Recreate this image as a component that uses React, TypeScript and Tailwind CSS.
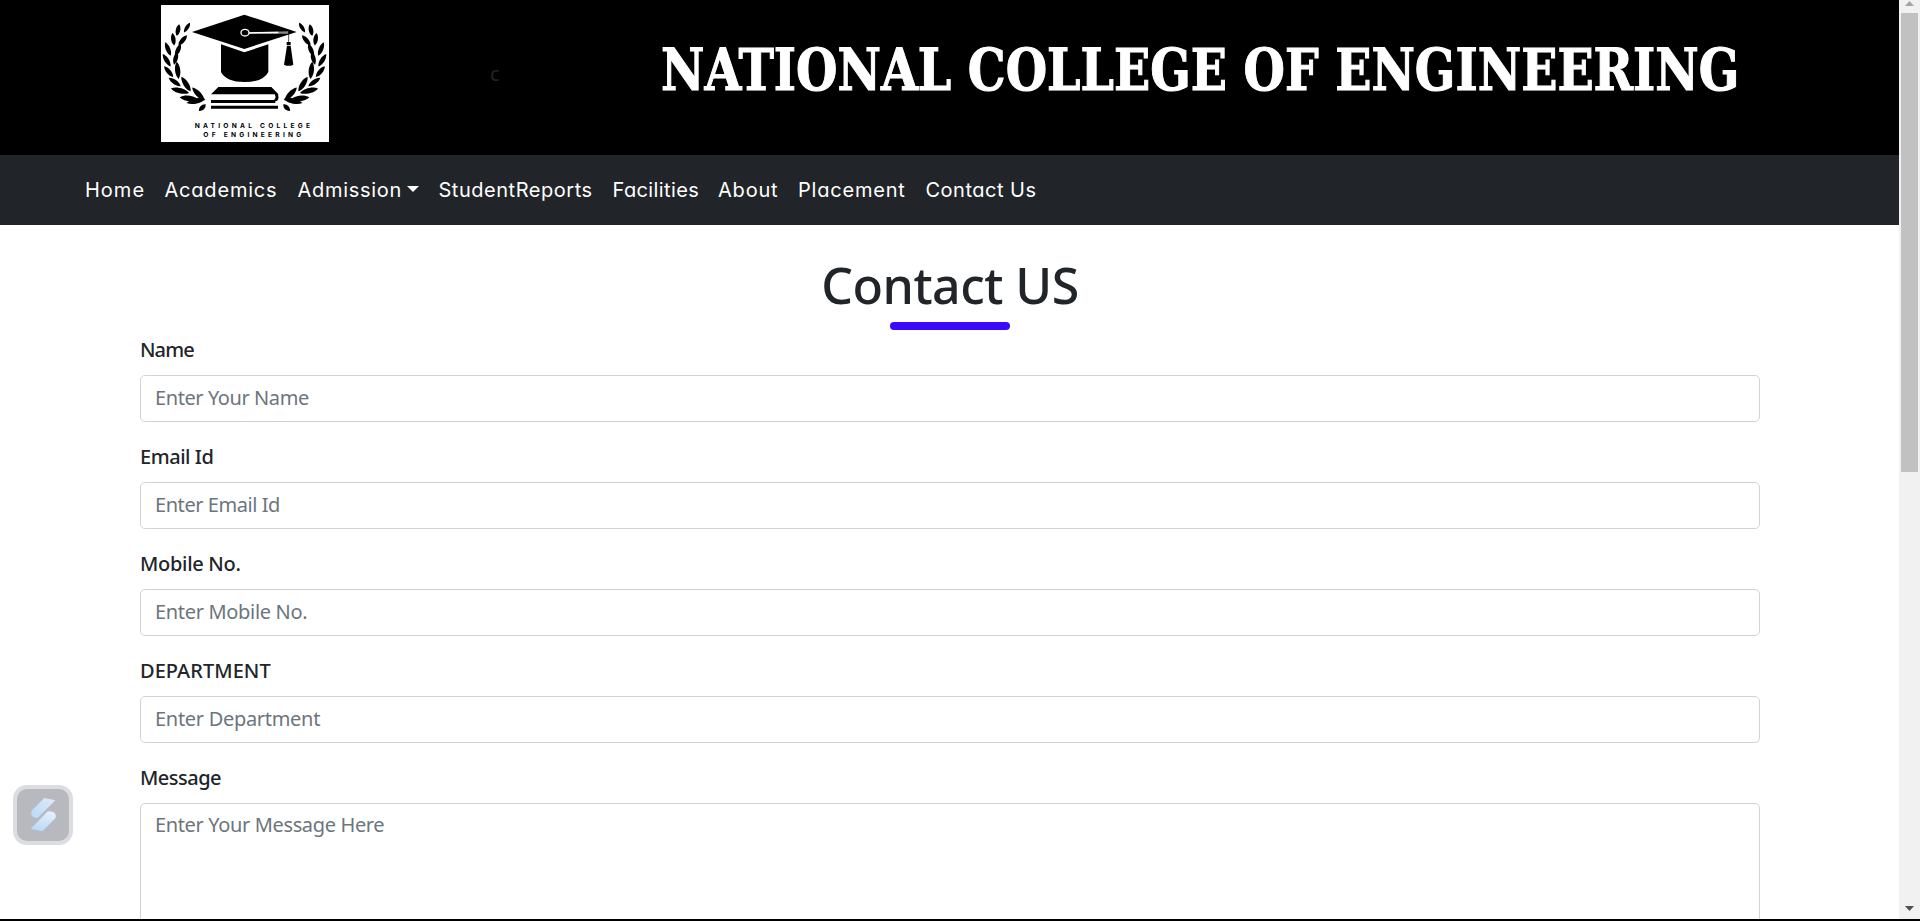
import React from "react";

const navItems = [
  { label: "Home", box: "w-[79.5px]", text: "tracking-[1px]" },
  { label: "Academics", box: "w-[133px]", text: "tracking-[0.8px]" },
  { label: "Admission", box: "w-[141px]", text: "tracking-[0.7px]", caret: true },
  { label: "StudentReports", box: "w-[174px]", text: "tracking-[0.53px]" },
  { label: "Facilities", box: "w-[105.5px]", text: "tracking-[0.38px]" },
  { label: "About", box: "w-[80px]", text: "tracking-[0.8px]" },
  { label: "Placement", box: "w-[127.5px]", text: "tracking-[0.8px]" },
  { label: "Contact Us", box: "w-[120px]", text: "tracking-[0.5px]" },
];

const fields = [
  { label: "Name", hint: "Enter Your Name", lt: "tracking-[-0.9px]", ht: "tracking-[-0.42px]" },
  { label: "Email Id", hint: "Enter Email Id", lt: "tracking-[-0.45px]", ht: "tracking-[-0.44px]" },
  { label: "Mobile No.", hint: "Enter Mobile No.", lt: "tracking-[-0.3px]", ht: "tracking-[-0.32px]" },
  { label: "DEPARTMENT", hint: "Enter Department", lt: "tracking-[0.05px]", ht: "tracking-[-0.3px]" },
];

const leaves: [number, number, number, number, number][] = [
  [111, 83, 17, 5, -58],
  [84, 90, 18, 6, -78],
  [98, 121, 20, 6, -50],
  [70, 118, 19, 6, -98],
  [84, 150, 20, 6, -66],
  [54, 147, 22, 6, 68],
  [77, 175, 20, 6, -76],
  [50, 181, 22, 6, 58],
  [83, 211, 26, 7, 84],
  [56, 215, 21, 6, 50],
  [108, 252, 26, 7, 58],
  [74, 246, 22, 6, 35],
  [90, 272, 28, 7, 14],
  [145, 282, 27, 7, 47],
  [116, 295, 27, 7, 6],
  [138, 303, 29, 7, -12],
  [157, 323, 14, 6, -45],
];

function Laurel() {
  return (
    <g>
      {leaves.map(([x, y, rx, ry, a], i) => (
        <path
          key={i}
          transform={`translate(${x} ${y}) rotate(${a})`}
          d={`M${-rx} 0C${-rx / 2} ${-ry * 1.5} ${rx / 2} ${-ry * 1.5} ${rx} 0C${rx / 2} ${ry * 1.5} ${-rx / 2} ${ry * 1.5} ${-rx} 0Z`}
        />
      ))}
    </g>
  );
}

function Logo() {
  return (
    <svg viewBox="33 15 504 411" className="h-[137px] w-[168px] bg-white" preserveAspectRatio="none">
      <Laurel />
      <g transform="translate(567 0) scale(-1 1)">
        <Laurel />
      </g>
      <path d="M283 44L440 96L283 147L126 96Z" />
      <path d="M213 133L283 157L355 133V216Q340 246 284 246Q228 246 213 216Z" />
      <path d="M296 97L415 94V101L296 101Z" fill="#888" />
      <path d="M296 96.500L385 95V100L296 101Z" fill="#fff" />
      <ellipse cx="285" cy="98" rx="12" ry="10" fill="#000" stroke="#fff" strokeWidth="4" />
      <path d="M416 96V128" stroke="#000" strokeWidth="2" />
      <path d="M410 126h12v9h-12zM411 137h11L430 194Q416 201 402 194Z" />
      <path d="M205 261H364L384 281Q389 304 376 304H183V300H372Q380 293 374 283H183Z" />
      <path d="M183 302H376V309H183ZM183 317H384V326H183Z" />
      <g fontFamily="Inter, sans-serif" fontWeight="700" fontSize="20">
        <text x="134" y="384" textLength="346">NATIONAL COLLEGE</text>
        <text x="160" y="411" textLength="294">OF ENGINEERING</text>
      </g>
    </svg>
  );
}

function FloatingBadge() {
  return (
    <div className="absolute top-[785px] left-[13px] h-[60px] w-[60px] rounded-[14px] bg-[#dcdde0] p-1">
      <svg viewBox="51 447 156 156" className="h-full w-full rounded-[10px] bg-[#b8b9bf]">
        <defs>
          <linearGradient id="upper" x1="1" y1="0" x2="0" y2="1">
            <stop offset="0" stopColor="#dcebfa" />
            <stop offset="1" stopColor="#b9d8f8" />
          </linearGradient>
          <linearGradient id="lower" x1="0.7" y1="0" x2="0.3" y2="1">
            <stop offset="0" stopColor="#e4f0fc" />
            <stop offset="1" stopColor="#b9d8f8" />
          </linearGradient>
        </defs>
        <path d="M133 474L166 481L116 531Q110 537 101 532Q90 525 95 512Z" fill="url(#upper)" />
        <path d="M92 567L141 516Q147 511 160 516Q171 523 166 535L127 574Z" fill="url(#lower)" />
      </svg>
    </div>
  );
}

function Scrollbar() {
  return (
    <div className="flex h-[919px] w-[21px] flex-col items-center bg-[#f1f1f1]">
      <svg viewBox="0 0 21 13" className="h-[13px] w-[21px] shrink-0">
        <path d="M10.500 1L15 6H6Z" fill="#a3a3a3" />
      </svg>
      <div className="h-[459px] w-[17px] bg-[#c1c1c1]" />
      <svg viewBox="0 0 21 13" className="mt-auto h-[13px] w-[21px] shrink-0">
        <path d="M6 0H15L10.500 5Z" fill="#505050" />
      </svg>
    </div>
  );
}

export default function App() {
  return (
    <div className="relative h-[921px] w-[1920px] overflow-hidden bg-black font-['Noto_Sans',sans-serif] text-xl text-[#212529]">
      <div className="flex h-[919px]">
        <main className="flex h-[919px] w-[1899px] flex-col overflow-hidden bg-white">
          <header className="flex h-[155px] shrink-0 bg-black pt-[5px] pl-[161px]">
            <Logo />
            <span className="mt-[54px] ml-[161px] w-[171px] text-xl leading-[30px]">c</span>
            <h1 className="mt-[25px] origin-left scale-x-[0.911] font-['DejaVu_Serif_Condensed','DejaVu_Serif',serif] text-[58px] leading-[80px] font-bold whitespace-nowrap text-white [-webkit-text-stroke:1px_#fff]">
              NATIONAL COLLEGE OF ENGINEERING
            </h1>
          </header>
          <nav className="flex h-[70px] shrink-0 items-center bg-[#212529] pl-[85px] font-['Inter',sans-serif] text-[20px] text-white [font-feature-settings:'cv11']">
            {navItems.map((n) => (
              <a key={n.label} className={`flex shrink-0 whitespace-nowrap ${n.box}`}>
                <span className={n.text}>{n.label}</span>
                {n.caret && (
                  <svg viewBox="0 0 12 6" className="mt-[10px] ml-[5px] h-[6px] w-[12px]">
                    <path d="M0 0H12L6 6Z" fill="#fff" />
                  </svg>
                )}
              </a>
            ))}
          </nav>
          <section className="flex flex-col pt-[31px] pr-[139px] pl-[140px]">
            <h2 className="text-center text-[50px] leading-[58px] font-medium tracking-[-0.5px]">Contact US</h2>
            <div className="mt-2 h-2 w-[120px] self-center rounded-full bg-[#3c09fb]" />
            <form className="mt-[5px] flex flex-col">
              {fields.map((f) => (
                <div key={f.label} className="flex h-[107px] flex-col">
                  <label className={`leading-[30px] font-medium ${f.lt}`}>{f.label}</label>
                  <input
                    placeholder={f.hint}
                    className={`mt-[10px] h-[47px] rounded-[5px] border border-[#ced4da] px-[14px] pb-[2px] placeholder:text-[#6c757d] ${f.ht}`}
                  />
                </div>
              ))}
              <label className="leading-[30px] font-medium tracking-[-0.5px]">Message</label>
              <textarea
                placeholder="Enter Your Message Here"
                className="mt-[10px] h-[160px] resize-none rounded-[5px] border border-[#ced4da] px-[14px] py-[6px] leading-[30px] tracking-[-0.36px] placeholder:text-[#6c757d]"
              />
            </form>
          </section>
        </main>
        <Scrollbar />
      </div>
      <FloatingBadge />
    </div>
  );
}
